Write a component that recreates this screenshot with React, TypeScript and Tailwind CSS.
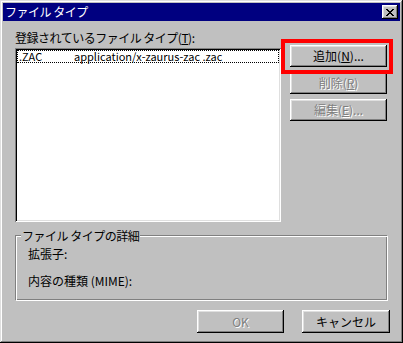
import React from "react";

const raised =
    "bg-[#c0c0c0] shadow-[inset_-1px_-1px_#000,inset_1px_1px_#fff,inset_-2px_-2px_#808080,inset_2px_2px_#dfdfdf]"
const sunken =
    "bg-white shadow-[inset_1px_1px_#808080,inset_-1px_-1px_#fff,inset_2px_2px_#000,inset_-2px_-2px_#dfdfdf]"
const disabled = "text-[#808080] [text-shadow:1px_1px_0_#fff]"

function Button({ label, off, className }: { label: React.ReactNode, off?: boolean, className: string }) {
    return (
        <div className={`${raised} ${className} flex items-center justify-center text-[12px] ${off ? disabled : "text-black"}`}>
            {label}
        </div>
    )
}

export default function App() {
    return (
        <div className="w-[403px] h-[343px] bg-[#c0c0c0] p-[3px] flex flex-col [font-family:'Noto_Sans_CJK_JP','Noto_Sans',sans-serif] shadow-[inset_-1px_-1px_#000,inset_1px_1px_#dfdfdf,inset_-2px_-2px_#808080,inset_2px_2px_#fff]">
            {/* title bar */}
            <div className="h-[18px] bg-[#000080] flex items-center justify-between pl-[2px] pr-[2px]">
                <span className="text-white text-[12px] leading-none tracking-[-0.5px]">ファイル タイプ</span>
                <div className={`${raised} w-[16px] h-[14px] flex items-center justify-center`}>
                    <svg width="8" height="7" viewBox="0 0 8 7" shapeRendering="crispEdges">
                        <path d="M0 0h2v1H0zM6 0h2v1H6zM1 1h2v1H1zM5 1h2v1H5zM2 2h4v1H2zM3 3h2v1H3zM2 4h4v1H2zM1 5h2v1H1zM5 5h2v1H5zM0 6h2v1H0zM6 6h2v1H6z" fill="#000" />
                    </svg>
                </div>
            </div>

            <div className="pt-[9px] pl-[12px] flex flex-col">
                <div className="flex items-start">
                    <div className="flex flex-col w-[266px]">
                        <div className="h-[15px] leading-[15px] text-[12px] text-black tracking-[-0.5px]">
                            登録されているファイル タイプ(<u>T</u>):
                        </div>
                        <div className={`${sunken} mt-[3px] h-[174px] p-[2px]`}>
                            <div className="h-[13px] border border-dotted border-black flex items-center text-[11px] leading-none text-black">
                                <span className="w-[56px] pl-[1px]">.ZAC</span>
                                <span>application/x-zaurus-zac .zac</span>
                            </div>
                        </div>
                    </div>

                    <div className="ml-[9px] mt-[15px] flex flex-col gap-[5px]">
                        <div className="relative">
                            <Button label={<>追加(<u>N</u>)...</>} className="w-[97px] h-[22px]" />
                            <div className="absolute -left-[9px] -right-[6px] -top-[6px] -bottom-[7px] border-4 border-[#ff0000]" />
                        </div>
                        <Button off label={<>削除(<u>R</u>)</>} className="w-[97px] h-[22px]" />
                        <Button off label={<>編集(<u>E</u>)...</>} className="w-[97px] h-[22px]" />
                    </div>
                </div>

                {/* details group */}
                <div className="relative mt-[13px] w-[373px] h-[66px] border border-t-[#808080] border-l-[#808080] border-b-white border-r-white shadow-[inset_1px_1px_#fff,inset_-1px_-1px_#808080]">
                    <span className="absolute -top-[8px] left-[5px] bg-[#c0c0c0] px-[1px] text-[12px] leading-[15px] text-black tracking-[-0.5px]">
                        ファイル タイプの詳細
                    </span>
                    <div className="pl-[12px] pt-[10px] flex flex-col gap-[12px] text-[12px] leading-[15px] text-black">
                        <span>拡張子:</span>
                        <span>内容の種類 (MIME):</span>
                    </div>
                </div>
            </div>

            <div className="mt-[9px] ml-[194px] flex gap-[18px]">
                <Button off label="OK" className="w-[87px] h-[23px]" />
                <Button label="キャンセル" className="w-[88px] h-[23px]" />
            </div>
        </div>
    )
}
